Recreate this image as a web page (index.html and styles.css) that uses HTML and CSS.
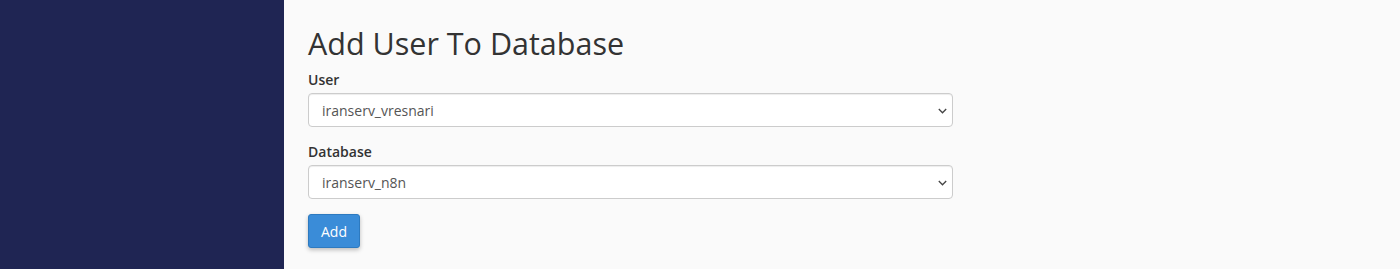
FILE: index.html
```html
<!DOCTYPE html>
<html>
<head>
<meta charset="utf-8">
<link rel="stylesheet" href="styles.css">
</head>
<body>
<div class="layout">
  <aside class="sidebar"></aside>
  <main class="main">
    <h1 class="title">Add User To Database</h1>
    <form class="form">
      <div class="group">
        <label class="label">User</label>
        <div class="select">
          <span class="select-value">iranserv_vresnari</span>
          <svg class="chev" width="9" height="6" viewBox="0 0 9 6"><path d="M0.8 1 L4.5 4.8 L8.2 1" fill="none" stroke="#444" stroke-width="1.3"/></svg>
        </div>
      </div>
      <div class="group">
        <label class="label">Database</label>
        <div class="select">
          <span class="select-value">iranserv_n8n</span>
          <svg class="chev" width="9" height="6" viewBox="0 0 9 6"><path d="M0.8 1 L4.5 4.8 L8.2 1" fill="none" stroke="#444" stroke-width="1.3"/></svg>
        </div>
      </div>
      <button type="button" class="btn">Add</button>
    </form>
  </main>
</div>
</body>
</html>
```

FILE: styles.css
```css
html, body {
  margin: 0;
  padding: 0;
  height: 100%;
}
body {
  font-family: "Open Sans", "Liberation Sans", sans-serif;
  color: #333;
  background: #fafafa;
}
.layout {
  display: flex;
  min-height: 269px;
}
.sidebar {
  width: 284px;
  flex: 0 0 284px;
  background: #1f2553;
}
.main {
  flex: 1;
  padding: 24px 24px 0 24px;
  background: #fafafa;
}
.title {
  font-size: 30.5px;
  font-weight: 400;
  line-height: 38px;
  margin: 0 0 8px 0;
  color: #333;
}
.form {
  width: 645px;
}
.group {
  margin-bottom: 15px;
}
.label {
  display: block;
  font-size: 14px;
  font-weight: 600;
  line-height: 20px;
  margin-bottom: 3px;
  color: #333;
}
.select {
  display: flex;
  align-items: center;
  justify-content: space-between;
  height: 34px;
  box-sizing: border-box;
  border: 1px solid #cccccc;
  border-radius: 4px;
  background: #fff;
  padding: 0 5px 0 13px;
  box-shadow: inset 0 1px 1px rgba(0,0,0,0.075);
}
.select-value {
  font-size: 14px;
  color: #555;
}
.chev {
  display: block;
  margin-top: 1px;
}
.btn {
  display: block;
  width: 52px;
  height: 34px;
  border: 1px solid #2d7ac0;
  border-radius: 3px;
  background: #3a8cd8;
  color: #fff;
  font-family: "Open Sans", "Liberation Sans", sans-serif;
  font-size: 14px;
  padding: 0;
  box-shadow: 0 2px 4px rgba(0,0,0,0.25);
}
```
